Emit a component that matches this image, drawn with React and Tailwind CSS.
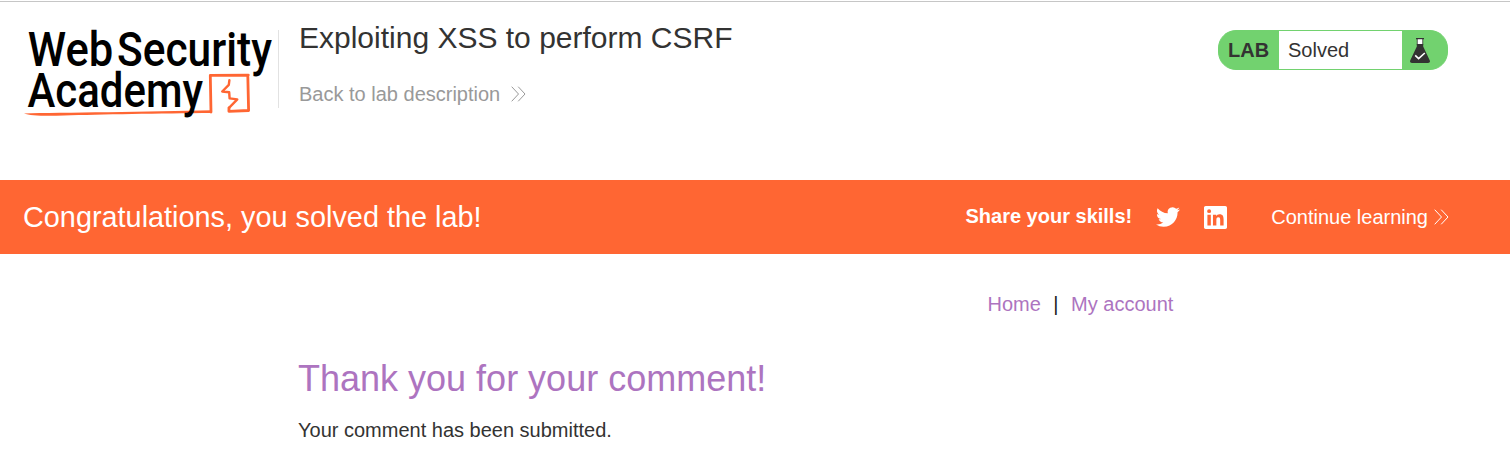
function Chevrons({ className }) {
  return (
    <svg className={className} width="15" height="16" viewBox="0 0 15 16" fill="none" stroke="currentColor" strokeWidth="1">
      <path d="M0.7 0.7 7.5 8 0.7 15.3M7.2 0.7 14 8 7.2 15.3" />
    </svg>
  );
}

function Logo() {
  return (
    <svg className="block h-[114px] w-[256px] shrink-0" viewBox="20 12 256 114">
      <g fill="none" stroke="#ff6633" strokeLinecap="round" strokeLinejoin="round">
        <path strokeWidth="2.8" d="M211 112 210.3 75.5M210.5 75.4 248.3 75.1M247.8 75.5 248.6 110.5M248.4 110.5 228.9 111.3 229 107.8" />
        <path strokeWidth="2.4" d="M229.4 80.2 228.8 84.8 222.2 91.5 229.2 92.3 229.6 98.4 237.3 99.4 229 107.8" />
      </g>
      <path fill="#ff6633" d="M24 113.4C60 112.7 150 112 212 110.3V113C160 113.5 100 114.4 64 115.5 44 115.9 30 115.8 24 113.4Z" />
      <g className="font-['Roboto',sans-serif]" fontWeight="500" fontSize="47.6" fill="#000">
        <text x="27.8" y="66" textLength="85.5" lengthAdjust="spacingAndGlyphs">Web</text>
        <text x="117" y="66" textLength="155" lengthAdjust="spacingAndGlyphs">Security</text>
        <text x="27.5" y="107" textLength="175.5" lengthAdjust="spacingAndGlyphs">Academy</text>
      </g>
    </svg>
  );
}

function Flask() {
  return (
    <svg width="20" height="25" viewBox="0 0 20 25">
      <path fill="#fff" d="M7.2 1H12.8V6.5H7.2Z" />
      <path fill="#333332" d="M6 0H14V1.2H6ZM6.8 1H7.6V7H6.8ZM12.4 1H13.2V7H12.4Z" />
      <path fill="#333332" d="M6.8 6H13.2V8.6L19.8 22.6Q20.6 25 18 25H2Q-.6 25 .2 22.6L6.8 8.6Z" />
      <path fill="none" stroke="#fff" strokeWidth="1.6" d="M5.2 17.4 8.6 20.6 14.8 15" />
    </svg>
  );
}

function Twitter() {
  return (
    <svg width="24" height="24" viewBox="0 0 24 24" fill="#fff">
      <path d="M23.953 4.57a10 10 0 0 1-2.825.775 4.958 4.958 0 0 0 2.163-2.723c-.951.555-2.005.959-3.127 1.184a4.92 4.92 0 0 0-8.384 4.482C7.69 8.095 4.067 6.13 1.64 3.162a4.822 4.822 0 0 0-.666 2.475c0 1.71.87 3.213 2.188 4.096a4.904 4.904 0 0 1-2.228-.616v.06a4.923 4.923 0 0 0 3.946 4.827 4.996 4.996 0 0 1-2.212.085 4.936 4.936 0 0 0 4.604 3.417 9.867 9.867 0 0 1-6.102 2.105c-.39 0-.779-.023-1.17-.067a13.995 13.995 0 0 0 7.557 2.209c9.053 0 13.998-7.496 13.998-13.985 0-.21 0-.42-.015-.63A9.935 9.935 0 0 0 24 4.59z" />
    </svg>
  );
}

function LinkedIn() {
  return (
    <svg width="23" height="23" viewBox="0 0 24 24" fill="#fff">
      <path d="M20.447 20.452h-3.554v-5.569c0-1.328-.027-3.037-1.852-3.037-1.853 0-2.136 1.445-2.136 2.939v5.667H9.351V9h3.414v1.561h.046c.477-.9 1.637-1.85 3.37-1.85 3.601 0 4.267 2.37 4.267 5.455v6.286zM5.337 7.433a2.062 2.062 0 1 1 0-4.125 2.062 2.062 0 0 1 0 4.125zM7.119 20.452H3.555V9h3.564v11.452zM22.225 0H1.771C.792 0 0 .774 0 1.729v20.542C0 23.227.792 24 1.771 24h20.451C23.2 24 24 23.227 24 22.271V1.729C24 .774 23.2 0 22.222 0h.003z" />
    </svg>
  );
}

export default function App() {
  return (
    <div className="h-[455px] overflow-hidden bg-white pt-px font-['Liberation_Sans',Arial,sans-serif] text-[20px] leading-6 text-[#333332]">
      <header className="flex h-[179px] items-start border-t border-[#c6c6c6] pl-5 pr-[62px]">
        <div className="flex pt-2.5">
          <Logo />
          <div className="ml-0.5 mt-[18px] h-[78px] w-px bg-[#e2e2e2]" />
        </div>
        <div className="ml-5 flex-1 pt-[18px]">
          <h1 className="text-[30px] leading-9">Exploiting XSS to perform CSRF</h1>
          <a className="mt-[26px] flex items-center text-[#999999]">
            Back to lab description
            <Chevrons className="ml-[11px]" />
          </a>
        </div>
        <div className="mt-7 flex h-10 w-[230px] items-stretch overflow-hidden rounded-[18px] border border-[#72d26f] bg-[#72d26f]">
          <span className="flex w-[60px] items-center pl-[9px] font-bold">LAB</span>
          <span className="flex w-[123px] items-center bg-white pl-[9px]">Solved</span>
          <span className="flex items-center pl-2"><Flask /></span>
        </div>
      </header>
      <section className="flex h-[74px] items-center bg-[#ff6633] pl-[23px] pr-[61px] text-white">
        <p className="flex-1 text-[28.85px] leading-9">Congratulations, you solved the lab!</p>
        <span className="mb-0.5 font-bold">Share your skills!</span>
        <span className="ml-6"><Twitter /></span>
        <span className="ml-6"><LinkedIn /></span>
        <a className="ml-11 flex items-center">
          Continue learning
          <Chevrons className="ml-1.5" />
        </a>
      </section>
      <nav className="flex pl-[987.5px] pt-[38px] text-[#ad74c0]">
        <a>Home</a>
        <span className="mx-[12.5px] text-[#222]">|</span>
        <a>My account</a>
      </nav>
      <main className="pl-[298px]">
        <h2 className="mt-[41px] text-[36px] leading-[44px]">
          <span className="text-[#ad74c0]">Thank you for your comment!</span>
        </h2>
        <p className="mt-[17px]">Your comment has been submitted.</p>
      </main>
    </div>
  );
}
